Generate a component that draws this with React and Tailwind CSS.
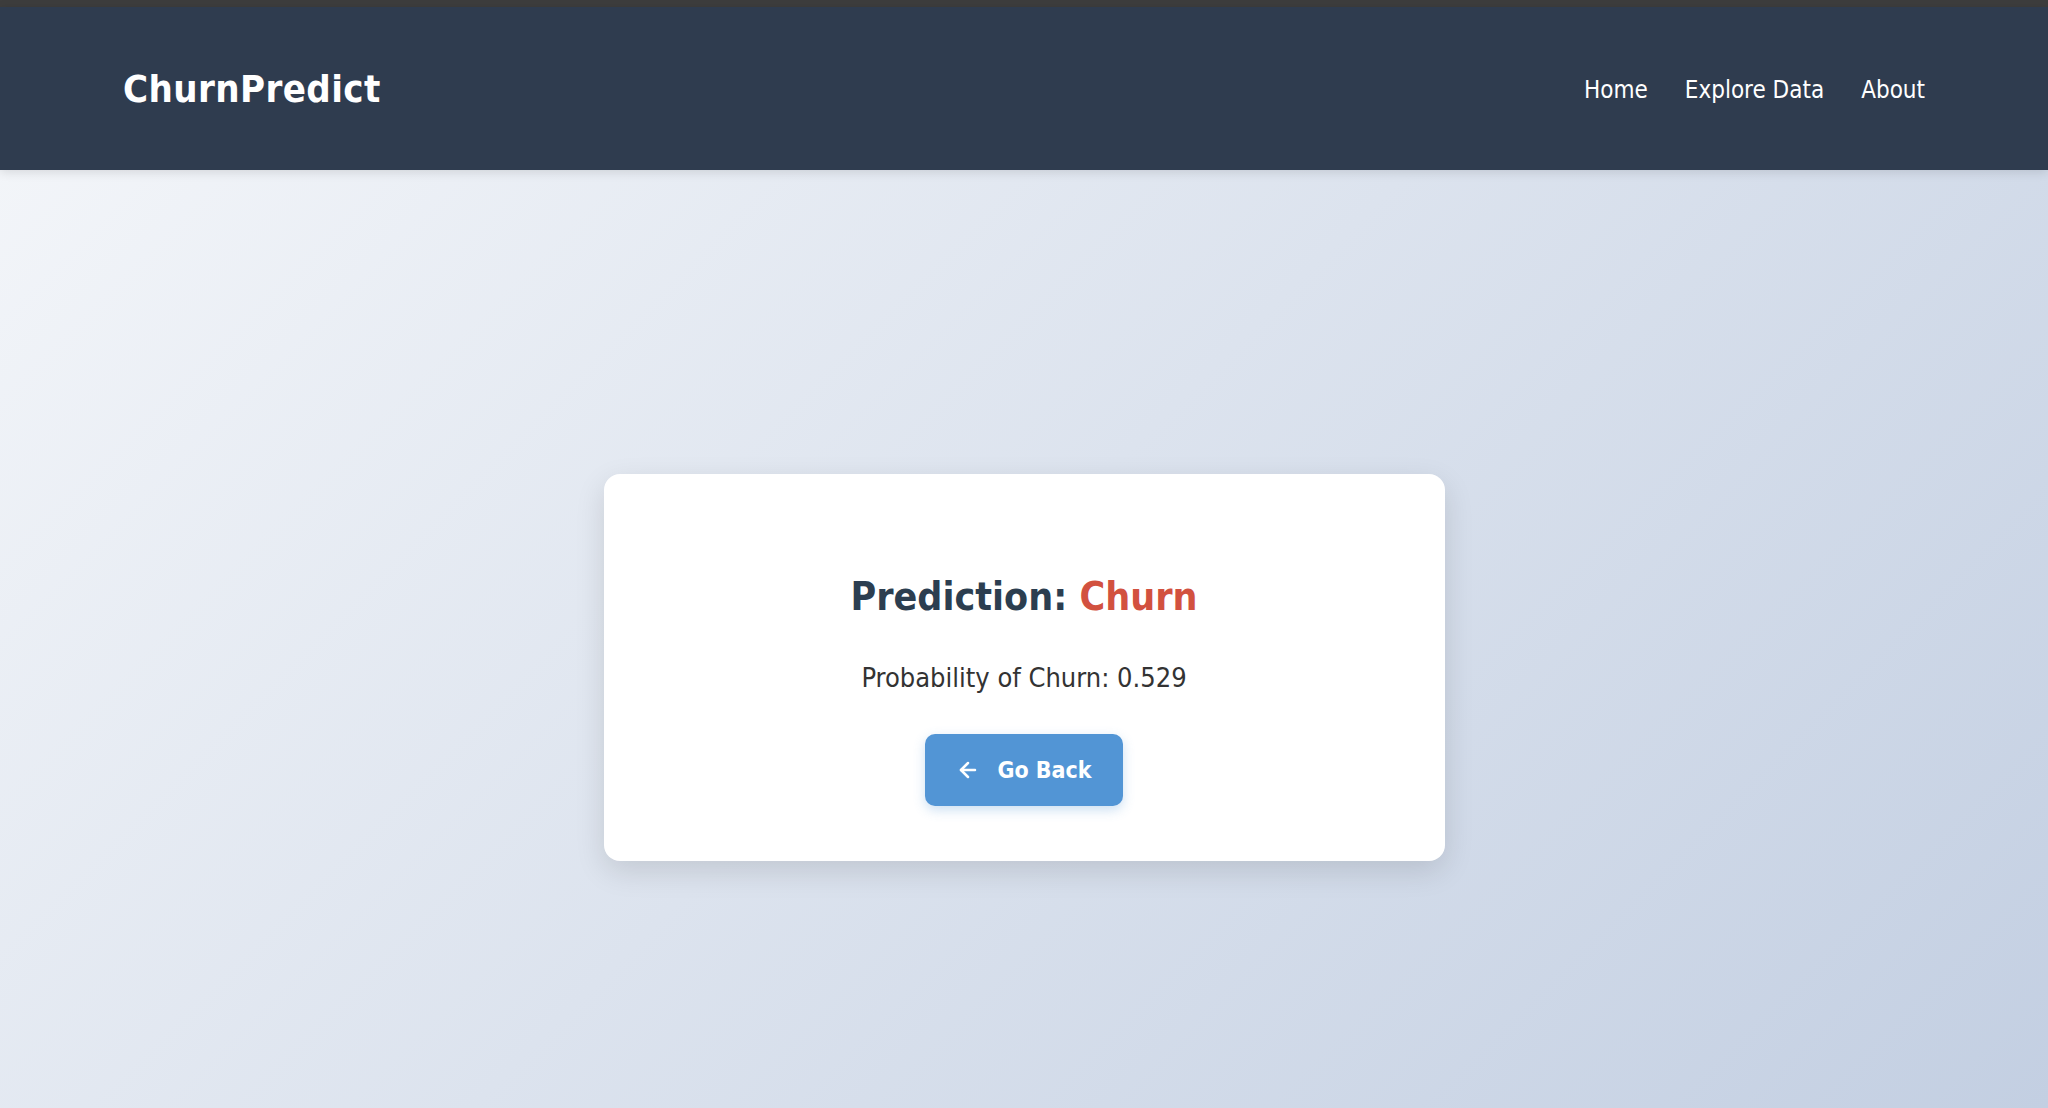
import React from 'react';
import { ArrowLeft } from 'lucide-react';

const font = { fontFamily: '"DejaVu Sans", Tahoma, Verdana, sans-serif' };

export default function App() {
    return (
        <div
            className="min-h-screen flex flex-col bg-[linear-gradient(135deg,#f5f7fa_0%,#c3cfe2_100%)] font-stretch-condensed"
            style={font}
        >
            <div className="h-[7px] bg-[#3d3d3d]" />

            {/* Header */}
            <header className="h-[163px] bg-[#2f3c4f] shadow-[0_2px_10px_rgba(0,0,0,0.12)] flex items-center justify-between px-[123px] pt-[2px]">
                <div className="text-white font-bold text-[38px] tracking-[0.4px]">ChurnPredict</div>
                <nav className="flex items-center gap-[37px] text-white text-[24px]">
                    <a href="#" className="hover:text-gray-200">Home</a>
                    <a href="#" className="hover:text-gray-200">Explore Data</a>
                    <a href="#" className="hover:text-gray-200">About</a>
                </nav>
            </header>

            {/* Result card */}
            <main className="flex-1 flex justify-center pt-[304px]">
                <div className="w-[841px] h-[387px] bg-white rounded-[16px] shadow-[0_10px_30px_rgba(0,0,0,0.12)] flex flex-col items-center pt-[99px]">
                    <h2 className="text-[39px] leading-[48px] font-bold text-[#2c3e50]">
                        Prediction: <span className="text-[#d2513f]">Churn</span>
                    </h2>
                    <p className="mt-[37px] text-[27px] leading-[39px] text-[#333]">
                        Probability of Churn: 0.529
                    </p>
                    <button className="mt-[37px] h-[72px] px-[31px] flex items-center gap-[17px] bg-[#5295d5] text-white rounded-[10px] font-bold text-[23px] shadow-[0_4px_12px_rgba(82,149,213,0.3)]">
                        <ArrowLeft size={24} strokeWidth={2.5} />
                        Go Back
                    </button>
                </div>
            </main>
        </div>
    );
}
